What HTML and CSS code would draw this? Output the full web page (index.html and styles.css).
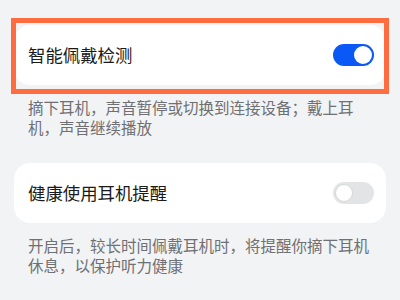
FILE: index.html
```html
<!DOCTYPE html>
<html lang="zh-CN">
<head>
<meta charset="utf-8">
<link rel="stylesheet" href="styles.css">
</head>
<body>
<div class="page">
  <section class="group">
    <div class="card highlighted">
      <span class="title">智能佩戴检测</span>
      <span class="switch on"><span class="knob"></span></span>
      <div class="mark"></div>
    </div>
    <p class="desc">摘下耳机，声音暂停或切换到连接设备；戴上耳机，声音继续播放</p>
  </section>
  <section class="group">
    <div class="card">
      <span class="title">健康使用耳机提醒</span>
      <span class="switch off"><span class="knob"></span></span>
    </div>
    <p class="desc">开启后，较长时间佩戴耳机时，将提醒你摘下耳机休息，以保护听力健康</p>
  </section>
</div>
</body>
</html>
```
FILE: styles.css
```css
html, body {
  margin: 0;
  padding: 0;
  background: #f1f3f5;
}
body {
  width: 400px;
  height: 300px;
  overflow: hidden;
  font-family: "Noto Sans CJK SC", "Noto Sans", sans-serif;
}
.page {
  padding: 25px 14px 0;
  display: flex;
  flex-direction: column;
  gap: 26px;
}
.group {
  display: flex;
  flex-direction: column;
}
.card {
  position: relative;
  height: 60px;
  background: #ffffff;
  border-radius: 16px;
  display: flex;
  align-items: center;
  justify-content: space-between;
  padding: 0 12px 0 14px;
  box-sizing: border-box;
}
.title {
  font-size: 17.4px;
  font-weight: 400;
  color: #1a1a1a;
  line-height: 24px;
}
.switch {
  position: relative;
  width: 41px;
  height: 22px;
  border-radius: 11px;
  box-sizing: border-box;
}
.switch.on {
  background: #0a59f7;
}
.switch.off {
  background: #e3e4e6;
}
.knob {
  position: absolute;
  top: 2px;
  width: 18px;
  height: 18px;
  border-radius: 50%;
  background: #ffffff;
  box-sizing: border-box;
}
.switch.on .knob {
  right: 2px;
}
.switch.off .knob {
  left: 2px;
  border: 1px solid #d6d7d9;
}
.mark {
  position: absolute;
  left: -3px;
  right: -3px;
  top: -7px;
  bottom: -9px;
  border: 5px solid #fd6d40;
  pointer-events: none;
}
.desc {
  margin: 12px 0 0;
  padding: 0 14px;
  font-size: 15.5px;
  line-height: 20px;
  color: #6f7073;
}
```
